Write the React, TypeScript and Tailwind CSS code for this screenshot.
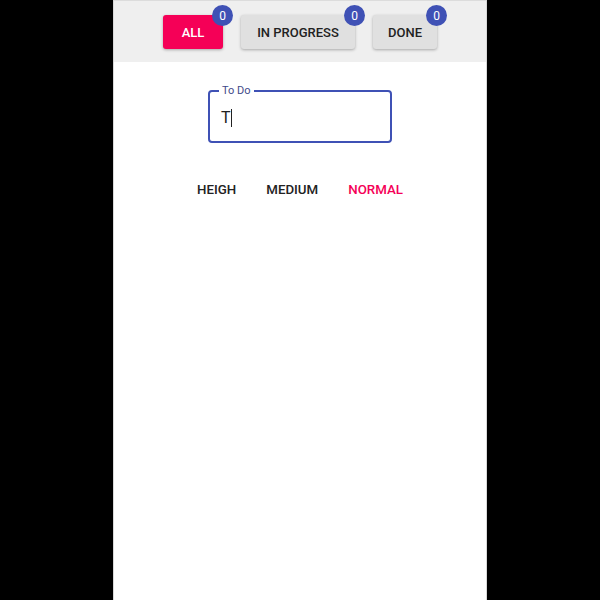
import React from "react";

const filters = [
  { label: "ALL", width: "w-[60px]", active: true },
  { label: "IN PROGRESS", width: "w-[114px]", active: false },
  { label: "DONE", width: "w-[64px]", active: false },
];

const priorities = ["HEIGH", "MEDIUM", "NORMAL"];

export default function App() {
  return (
    <div className="min-h-[600px] w-full bg-black flex justify-center font-['Roboto',sans-serif]">
      <div className="w-[374px] min-h-[600px] bg-white border-x border-[#d8d8d8] flex flex-col">
        {/* Filter bar */}
        <div className="h-[62px] bg-[#efefef] border-t border-[#dcdcdc] flex justify-center gap-[18px] pt-[14px]">
          {filters.map((f) => (
            <div key={f.label} className="relative">
              <button
                className={`${f.width} h-[34px] rounded-[3px] text-[13px] font-medium pt-[2px] shadow-[0_1px_3px_rgba(0,0,0,0.3)] ${
                  f.active ? "bg-[#f50057] text-white" : "bg-[#e0e0e0] text-[#222]"
                }`}
              >
                {f.label}
              </button>
              <span className="absolute -top-[10px] -right-[10px] w-[21px] h-[21px] rounded-full bg-[#3f51b5] text-white text-[12px] flex items-center justify-center">
                0
              </span>
            </div>
          ))}
        </div>

        {/* Input */}
        <div className="flex justify-center pt-[28px]">
          <div className="relative w-[184px] h-[53px] border-2 border-[#3f51b5] rounded-[4px] flex items-center pl-[11px] pt-[2px]">
            <span className="absolute -top-[8px] left-[9px] px-[3px] bg-white text-[11px] leading-[14px] text-[#3f4a8a]">
              To Do
            </span>
            <span className="text-[16px] text-[#222]">T</span>
            <span className="w-px h-[18px] bg-[#222]" />
          </div>
        </div>

        {/* Priorities */}
        <div className="flex justify-center gap-[30px] pt-[37px]">
          {priorities.map((p) => (
            <span
              key={p}
              className={`text-[13.3px] font-medium ${p === "NORMAL" ? "text-[#f50057]" : "text-[#222]"}`}
            >
              {p}
            </span>
          ))}
        </div>
      </div>
    </div>
  );
}
